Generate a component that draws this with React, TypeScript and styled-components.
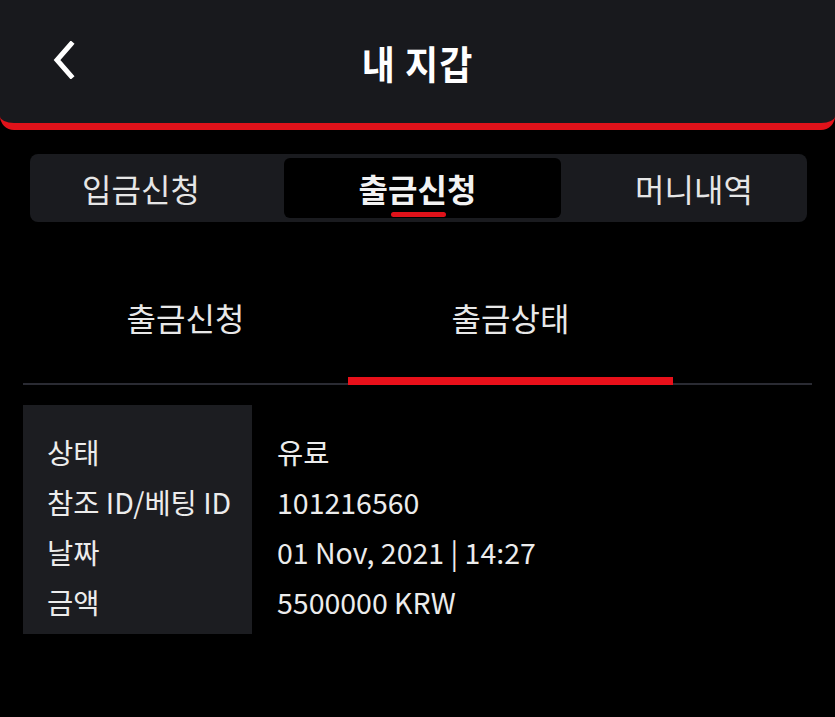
import React from "react";
import styled, { createGlobalStyle } from "styled-components";

const GlobalStyle = createGlobalStyle`
  html, body {
    margin: 0;
    padding: 0;
    background: #000;
  }
  body {
    font-family: "Noto Sans CJK KR", "Noto Sans", sans-serif;
    color: #ececec;
  }
`;

const Page = styled.div`
  width: 835px;
  min-height: 717px;
  background: #000;
`;

const Header = styled.header`
  height: 123px;
  background: #18191d;
  border-bottom: 7px solid #e0121a;
  border-radius: 0 0 14px 14px;
  display: flex;
  align-items: center;
  justify-content: center;
  position: relative;
`;

const BackButton = styled.button`
  position: absolute;
  left: 42px;
  top: 38px;
  width: 44px;
  height: 44px;
  padding: 0;
  border: none;
  background: transparent;
  display: flex;
  align-items: center;
  justify-content: center;
`;

const Title = styled.h1`
  margin: 0;
  font-size: 36px;
  font-weight: 700;
  color: #fff;
  letter-spacing: 1px;
  transform: scaleY(1.08);
`;

const TabBar = styled.nav`
  margin: 24px 28px 0 30px;
  height: 68px;
  background: #1a1b1f;
  border-radius: 8px;
  display: grid;
  grid-template-columns: 254px 277px 1fr;
  align-items: center;
`;

const Tab = styled.div<{ $active?: boolean; $shift?: number }>`
  height: 60px;
  border-radius: 6px;
  background: ${(p) => (p.$active ? "#000" : "transparent")};
  display: flex;
  align-items: center;
  justify-content: center;
  box-sizing: border-box;
  padding-left: ${(p) => (p.$shift && p.$shift > 0 ? p.$shift : 0)}px;
  padding-right: ${(p) => (p.$shift && p.$shift < 0 ? -p.$shift : 0)}px;
  font-size: 32px;
  font-weight: ${(p) => (p.$active ? 700 : 400)};
  color: ${(p) => (p.$active ? "#f2f2f2" : "#e6e6e6")};
  position: relative;
`;

const TabMark = styled.span`
  position: absolute;
  left: 107px;
  bottom: 1px;
  width: 55px;
  height: 5px;
  border-radius: 3px;
  background: #e0121a;
`;

const SubTabs = styled.div`
  margin: 63px 23px 0 23px;
  display: flex;
  border-bottom: 2px solid #2a2b33;
`;

const SubTab = styled.div<{ $active?: boolean }>`
  width: 325px;
  height: 100px;
  display: flex;
  justify-content: center;
  align-items: flex-start;
  font-size: 32px;
  color: #e8e8e8;
  line-height: 1;
  box-sizing: border-box;
  border-bottom: 8px solid ${(p) => (p.$active ? "#e8101a" : "transparent")};
  margin-bottom: -2px;
`;

const SubTabLabel = styled.span`
  margin-top: 16px;
`;

const Details = styled.div`
  margin: 20px 23px 0 23px;
  display: flex;
`;

const LabelCol = styled.div`
  width: 229px;
  height: 229px;
  background: #1c1d21;
  box-sizing: border-box;
  padding: 22px 0 0 24px;
`;

const ValueCol = styled.div`
  padding: 22px 0 0 25px;
`;

const Cell = styled.div`
  height: 50px;
  line-height: 50px;
  font-size: 28.5px;
  color: #ececec;
  white-space: nowrap;
`;

const rows = [
  { label: "상태", value: "유료" },
  { label: "참조 ID/베팅 ID", value: "101216560" },
  { label: "날짜", value: "01 Nov, 2021 | 14:27" },
  { label: "금액", value: "5500000 KRW" },
];

const App: React.FC = () => {
  return (
    <Page>
      <GlobalStyle />
      <Header>
        <BackButton aria-label="back">
          <svg width="26" height="38" viewBox="0 0 26 38">
            <polyline
              points="20,3 6,19 20,35"
              fill="none"
              stroke="#fff"
              strokeWidth="5"
              strokeLinecap="square"
            />
          </svg>
        </BackButton>
        <Title>내 지갑</Title>
      </Header>

      <TabBar>
        <Tab $shift={-32}>입금신청</Tab>
        <Tab $active $shift={-10}>
          출금신청
          <TabMark />
        </Tab>
        <Tab $shift={20}>머니내역</Tab>
      </TabBar>

      <SubTabs>
        <SubTab>
          <SubTabLabel>출금신청</SubTabLabel>
        </SubTab>
        <SubTab $active>
          <SubTabLabel>출금상태</SubTabLabel>
        </SubTab>
      </SubTabs>

      <Details>
        <LabelCol>
          {rows.map((r) => (
            <Cell key={r.label}>{r.label}</Cell>
          ))}
        </LabelCol>
        <ValueCol>
          {rows.map((r) => (
            <Cell key={r.label}>{r.value}</Cell>
          ))}
        </ValueCol>
      </Details>
    </Page>
  );
};

export default App;
